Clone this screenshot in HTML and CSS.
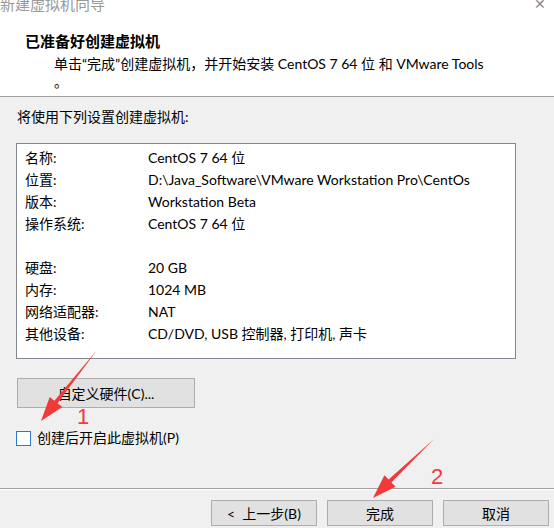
FILE: index.html
```html
<!DOCTYPE html>
<html lang="zh-CN">
<head>
    <meta charset="UTF-8">
    <title>新建虚拟机向导</title>
    <link rel="stylesheet" href="styles.css">
</head>
<body>
    <div class="wizard">
        <div class="header">
            <div class="caption">
                <span class="caption-title">新建虚拟机向导</span>
                <span class="caption-close">✕</span>
            </div>
            <h1>已准备好创建虚拟机</h1>
            <p class="lead">单击“完成”创建虚拟机，并开始安装 CentOS 7 64 位 和 VMware Tools<br>。</p>
        </div>

        <div class="content">
            <p class="intro">将使用下列设置创建虚拟机:</p>

            <div class="summary">
                <div class="row"><span class="key">名称:</span><span>CentOS 7 64 位</span></div>
                <div class="row"><span class="key">位置:</span><span>D:\Java_Software\VMware Workstation Pro\CentOs</span></div>
                <div class="row"><span class="key">版本:</span><span>Workstation Beta</span></div>
                <div class="row"><span class="key">操作系统:</span><span>CentOS 7 64 位</span></div>
                <div class="row"></div>
                <div class="row"><span class="key">硬盘:</span><span>20 GB</span></div>
                <div class="row"><span class="key">内存:</span><span>1024 MB</span></div>
                <div class="row"><span class="key">网络适配器:</span><span>NAT</span></div>
                <div class="row"><span class="key">其他设备:</span><span>CD/DVD, USB 控制器, 打印机, 声卡</span></div>
            </div>

            <button class="btn btn-hw">自定义硬件(C)...</button>

            <label class="check"><span class="check-box"></span>创建后开启此虚拟机(P)</label>
        </div>

        <div class="footer">
            <button class="btn">&lt;&nbsp; 上一步(B)</button>
            <button class="btn">完成</button>
            <button class="btn">取消</button>
        </div>

        <!-- annotation arrows drawn over the dialog -->
        <svg class="marks" width="554" height="528" viewBox="0 0 554 528">
            <polygon points="97,350 57.6,403.2 62.3,407 41,421 49.7,397 54.4,400.8" />
            <text x="77" y="424">1</text>
            <polygon points="434,439 391.4,482.4 395.6,486.7 373,498 384.4,475.3 388.6,479.6" />
            <text x="431" y="484">2</text>
        </svg>
    </div>
</body>
</html>
```

FILE: styles.css
```css
body {
    margin: 0;
    background: #f0f0f0;
    font-family: Lato, "Noto Sans CJK SC", sans-serif;
    font-size: 14px;
    color: #000;
}
.wizard {
    position: relative;
    width: 554px;
    height: 528px;
    overflow: hidden;
    background: #f0f0f0;
}
.header {
    box-sizing: border-box;
    height: 97px;
    overflow: hidden;
    background: #fff;
    border-bottom: 1px solid #a0a0a0;
}
.caption {
    display: flex;
    justify-content: space-between;
    height: 14px;
    line-height: 14px;
    margin-top: -3px;
    padding: 0 8px 0 0;
    color: #999;
    font-size: 15px;
}
.caption-close {
    font-size: 14px;
    color: #888;
}
h1 {
    margin: 20px 0 0 25px;
    font-size: 15px;
    line-height: 20px;
    font-weight: bold;
}
.lead {
    margin: 4px 0 0 54px;
    line-height: 18px;
}
.content {
    box-sizing: border-box;
    height: 391px;
    padding: 10px 0 0 16px;
}
.intro {
    margin: 0 0 16px 1px;
    line-height: 20px;
}
.summary {
    box-sizing: border-box;
    width: 500px;
    height: 216px;
    padding: 3px 8px 0;
    background: #fff;
    border: 1px solid #828790;
}
.row {
    display: grid;
    grid-template-columns: 123px 1fr;
    height: 22px;
    line-height: 22px;
    white-space: nowrap;
}
.btn {
    box-sizing: border-box;
    height: 26px;
    width: 106px;
    padding: 0;
    background: #e1e1e1;
    border: 1px solid #adadad;
    font: inherit;
    color: #000;
}
.btn-hw {
    display: block;
    width: 178px;
    height: 30px;
    margin: 19px 0 0 1px;
}
.check {
    display: flex;
    align-items: center;
    gap: 6px;
    margin-top: 22px;
    line-height: 16px;
}
.check-box {
    box-sizing: border-box;
    width: 15px;
    height: 15px;
    background: #fff;
    border: 1px solid #2a78d4;
}
.footer {
    box-sizing: border-box;
    height: 40px;
    display: flex;
    justify-content: flex-end;
    gap: 10px;
    padding: 11px 5px 0 0;
    border-top: 1px solid #a0a0a0;
    box-shadow: inset 0 1px 0 #fff;
}
.marks {
    position: absolute;
    left: 0;
    top: 0;
    pointer-events: none;
}
.marks polygon {
    fill: #f23a3a;
}
.marks text {
    fill: #f23a3a;
    font-family: "Liberation Sans", sans-serif;
    font-size: 22px;
}
```
